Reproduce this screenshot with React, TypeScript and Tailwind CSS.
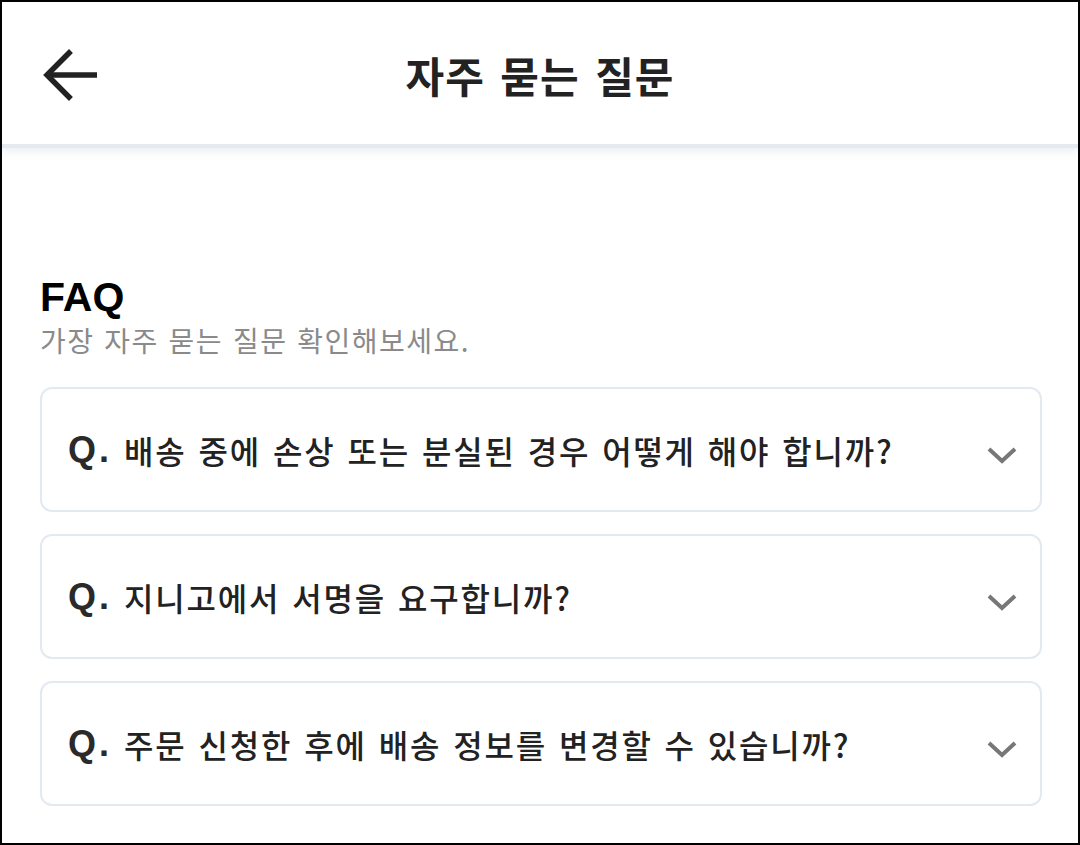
import React from "react";

const questions = [
  "배송 중에 손상 또는 분실된 경우 어떻게 해야 합니까?",
  "지니고에서 서명을 요구합니까?",
  "주문 신청한 후에 배송 정보를 변경할 수 있습니까?",
];

const kr = { fontFamily: '"Noto Sans CJK KR", "Noto Sans", sans-serif' };
const latin = { fontFamily: '"Liberation Sans", Arial, sans-serif' };

const App = () => {
  return (
    <div className="w-[1080px] h-[845px] border-2 border-black bg-white overflow-hidden flex flex-col" style={kr}>
      {/* 헤더 */}
      <div className="relative h-[146px] shrink-0 flex items-center justify-center border-b-[4px] border-[#e4eaf0] shadow-[0_4px_8px_rgba(200,210,220,0.35)]">
        <button className="absolute left-[38px] top-[43px] w-[60px] h-[60px] flex items-center justify-center">
          <svg width="58" height="58" viewBox="0 0 58 58" fill="none">
            <path d="M56 29H6" stroke="#222" strokeWidth="5.5" />
            <path d="M28 7L6 29L28 51" stroke="#222" strokeWidth="5.5" strokeLinecap="square" />
          </svg>
        </button>
        <h1 className="text-[42px] font-bold text-[#222] tracking-[1px] [word-spacing:5px] mt-[2px]">자주 묻는 질문</h1>
      </div>

      <div className="pl-[38px] pr-[36px] pt-[124px]">
        <h2 className="text-[41px] font-bold text-black leading-[50px]" style={latin}>
          FAQ
        </h2>
        <p className="text-[28px] text-[#8a8a8a] leading-[34px] tracking-[1.5px] [word-spacing:2px] mt-[1px]">
          가장 자주 묻는 질문 확인해보세요.
        </p>

        <div className="mt-[30px] flex flex-col gap-[22px]">
          {questions.map((q) => (
            <div
              key={q}
              className="h-[125px] border-2 border-[#e2e9f0] rounded-[12px] flex items-center pl-[26px] pr-[22px]"
            >
              <span className="text-[36px] font-bold text-[#2a2a2a] tracking-[3px] mr-[12px]" style={latin}>
                Q.
              </span>
              <span className="text-[32px] font-medium text-[#222] tracking-[1.8px] [word-spacing:3px] flex-1">
                {q}
              </span>
              <svg width="32" height="20" viewBox="0 0 32 20" fill="none" className="mt-[10px]">
                <path d="M3 4L16 16L29 4" stroke="#777" strokeWidth="4" />
              </svg>
            </div>
          ))}
        </div>
      </div>
    </div>
  );
};

export default App;
